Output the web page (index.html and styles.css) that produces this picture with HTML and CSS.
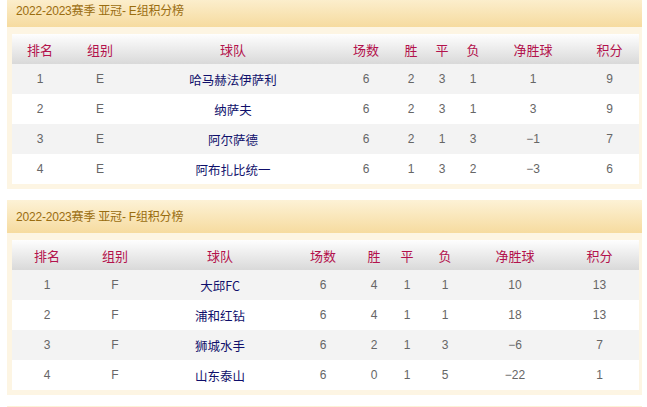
FILE: index.html
```html
<!DOCTYPE html>
<html lang="zh">
<head>
<meta charset="utf-8">
<title>亚冠积分榜</title>
<link rel="stylesheet" href="styles.css">
</head>
<body>
<div class="page">
  <section class="block">
    <div class="title">2022-2023赛季 亚冠- E组积分榜</div>
    <div class="panel">
      <table class="standings group-e">
        <colgroup>
          <col class="c1"><col class="c2"><col class="c3"><col class="c4"><col class="c5"><col class="c6"><col class="c7"><col class="c8"><col class="c9">
        </colgroup>
        <thead>
          <tr><th>排名</th><th>组别</th><th>球队</th><th>场数</th><th>胜</th><th>平</th><th>负</th><th>净胜球</th><th>积分</th></tr>
        </thead>
        <tbody>
          <tr><td>1</td><td>E</td><td class="team">哈马赫法伊萨利</td><td>6</td><td>2</td><td>3</td><td>1</td><td>1</td><td>9</td></tr>
          <tr><td>2</td><td>E</td><td class="team">纳萨夫</td><td>6</td><td>2</td><td>3</td><td>1</td><td>3</td><td>9</td></tr>
          <tr><td>3</td><td>E</td><td class="team">阿尔萨德</td><td>6</td><td>2</td><td>1</td><td>3</td><td>−1</td><td>7</td></tr>
          <tr><td>4</td><td>E</td><td class="team">阿布扎比统一</td><td>6</td><td>1</td><td>3</td><td>2</td><td>−3</td><td>6</td></tr>
        </tbody>
      </table>
    </div>
  </section>
  <section class="block">
    <div class="title">2022-2023赛季 亚冠- F组积分榜</div>
    <div class="panel">
      <table class="standings group-f">
        <colgroup>
          <col class="c1"><col class="c2"><col class="c3"><col class="c4"><col class="c5"><col class="c6"><col class="c7"><col class="c8"><col class="c9">
        </colgroup>
        <thead>
          <tr><th>排名</th><th>组别</th><th>球队</th><th>场数</th><th>胜</th><th>平</th><th>负</th><th>净胜球</th><th>积分</th></tr>
        </thead>
        <tbody>
          <tr><td>1</td><td>F</td><td class="team">大邱FC</td><td>6</td><td>4</td><td>1</td><td>1</td><td>10</td><td>13</td></tr>
          <tr><td>2</td><td>F</td><td class="team">浦和红钻</td><td>6</td><td>4</td><td>1</td><td>1</td><td>18</td><td>13</td></tr>
          <tr><td>3</td><td>F</td><td class="team">狮城水手</td><td>6</td><td>2</td><td>1</td><td>3</td><td>−6</td><td>7</td></tr>
          <tr><td>4</td><td>F</td><td class="team">山东泰山</td><td>6</td><td>0</td><td>1</td><td>5</td><td>−22</td><td>1</td></tr>
        </tbody>
      </table>
    </div>
  </section>
  <section class="block">
    <div class="title"></div>
  </section>
</div>
</body>
</html>
```
FILE: styles.css
```css
html, body {
  margin: 0;
  padding: 0;
  background: #ffffff;
}
body {
  font-family: "Liberation Sans", "Noto Sans CJK SC", sans-serif;
  font-size: 12px;
}
.page {
  width: 635px;
  margin: -6px 0 0 7px;
  display: flex;
  flex-direction: column;
  gap: 11px;
}
.title {
  height: 33px;
  line-height: 35px;
  padding-left: 9px;
  background: linear-gradient(#fdf2d6, #f6db9f);
  color: #9a6d10;
  font-size: 12px;
  letter-spacing: -0.2px;
}
.panel {
  background: #fdf5e3;
  padding: 7px 3px 5px 5px;
}
.standings {
  width: 627px;
  border-collapse: collapse;
  table-layout: fixed;
}
.standings th,
.standings td {
  height: 30px;
  padding: 0;
  text-align: center;
  font-weight: normal;
}
.standings th {
  background: linear-gradient(#fefefe, #d9d9d9);
  color: #b3124c;
  font-size: 13px;
  font-family: "Noto Sans CJK SC", sans-serif;
}
.standings td {
  color: #666666;
  font-size: 12px;
}
.standings tbody tr:nth-child(odd) td {
  background: #f3f3f3;
}
.standings tbody tr:nth-child(even) td {
  background: #ffffff;
}
.standings td.team {
  color: #0f0f6b;
  font-family: "Noto Sans CJK SC", sans-serif;
  font-size: 12.5px;
}

.group-e .c1 { width: 56px; }
.group-e .c2 { width: 64px; }
.group-e .c3 { width: 202px; }
.group-e .c4 { width: 64px; }
.group-e .c5 { width: 26px; }
.group-e .c6 { width: 36px; }
.group-e .c7 { width: 26px; }
.group-e .c8 { width: 94px; }
.group-e .c9 { width: 59px; }

.group-f .c1 { width: 70px; }
.group-f .c2 { width: 66px; }
.group-f .c3 { width: 144px; }
.group-f .c4 { width: 62px; }
.group-f .c5 { width: 40px; }
.group-f .c6 { width: 26px; }
.group-f .c7 { width: 50px; }
.group-f .c8 { width: 90px; }
.group-f .c9 { width: 79px; }
```
